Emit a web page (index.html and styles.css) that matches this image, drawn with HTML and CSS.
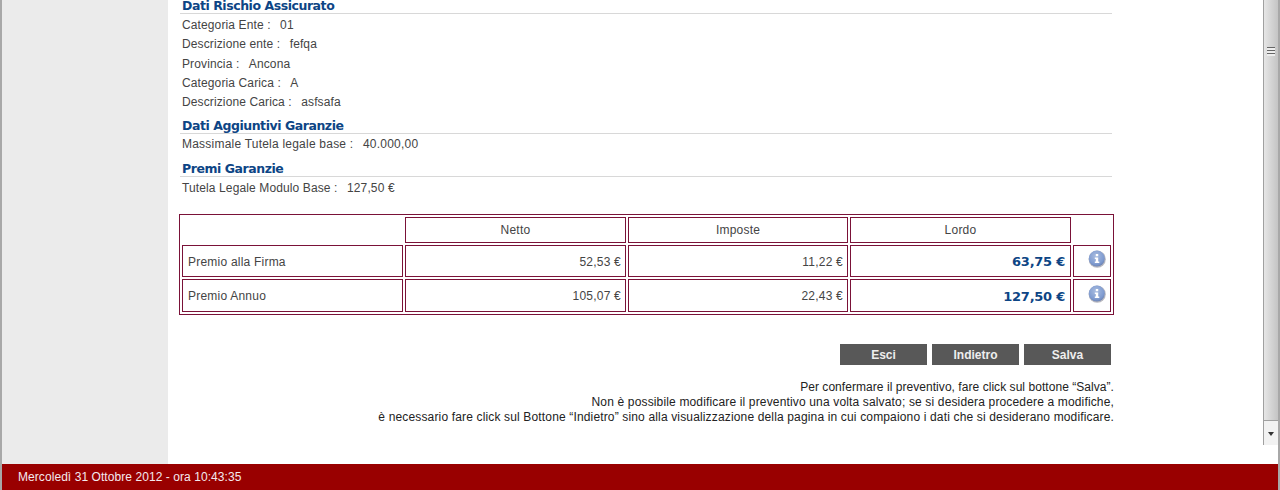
FILE: index.html
```html
<!DOCTYPE html>
<html lang="it">
<head>
    <meta charset="UTF-8">
    <meta name="viewport" content="width=device-width, initial-scale=1.0">
    <title>Preventivo</title>
    <link rel="stylesheet" href="styles.css">
</head>
<body>
    <div class="pagina">
        <div class="laterale"></div>
        <div class="contenuto">
            <h2 class="titolo primo">Dati Rischio Assicurato</h2>
            <p class="riga">Categoria Ente : <span class="dato">01</span></p>
            <p class="riga">Descrizione ente : <span class="dato">fefqa</span></p>
            <p class="riga">Provincia : <span class="dato">Ancona</span></p>
            <p class="riga">Categoria Carica : <span class="dato">A</span></p>
            <p class="riga">Descrizione Carica : <span class="dato">asfsafa</span></p>
            <h2 class="titolo">Dati Aggiuntivi Garanzie</h2>
            <p class="riga larga">Massimale Tutela legale base : <span class="dato">40.000,00</span></p>
            <h2 class="titolo terzo">Premi Garanzie</h2>
            <p class="riga">Tutela Legale Modulo Base : <span class="dato">127,50 €</span></p>

            <table class="premi">
                <tr class="testata">
                    <td class="vuota"></td>
                    <td class="c-num">Netto</td>
                    <td class="c-num">Imposte</td>
                    <td class="c-num">Lordo</td>
                    <td class="vuota"></td>
                </tr>
                <tr class="firma">
                    <td class="nome">Premio alla Firma</td>
                    <td class="val">52,53 €</td>
                    <td class="val">11,22 €</td>
                    <td class="val lordo">63,75 €</td>
                    <td class="info">
                        <svg class="icona" viewBox="0 0 18 18" width="18" height="18">
                            <defs>
                                <radialGradient id="palla" cx="45%" cy="35%" r="65%">
                                    <stop offset="0" stop-color="#a9bde0"/>
                                    <stop offset="0.75" stop-color="#7f9bd0"/>
                                    <stop offset="1" stop-color="#6d84b4"/>
                                </radialGradient>
                            </defs>
                            <circle cx="9.2" cy="9.2" r="8.6" fill="#b9b9c0"/>
                            <circle cx="8.8" cy="8.6" r="8" fill="url(#palla)"/>
                            <rect x="7.8" y="4" width="2.4" height="2.2" fill="#fff"/>
                            <path d="M6.8 7.4h3.4v4.2h1.1v1.5H6.8v-1.5h1V8.9h-1z" fill="#fff"/>
                        </svg>
                    </td>
                </tr>
                <tr class="annuo">
                    <td class="nome">Premio Annuo</td>
                    <td class="val">105,07 €</td>
                    <td class="val">22,43 €</td>
                    <td class="val lordo">127,50 €</td>
                    <td class="info">
                        <svg class="icona" viewBox="0 0 18 18" width="18" height="18">
                            <circle cx="9.2" cy="9.2" r="8.6" fill="#b9b9c0"/>
                            <circle cx="8.8" cy="8.6" r="8" fill="url(#palla)"/>
                            <rect x="7.8" y="4" width="2.4" height="2.2" fill="#fff"/>
                            <path d="M6.8 7.4h3.4v4.2h1.1v1.5H6.8v-1.5h1V8.9h-1z" fill="#fff"/>
                        </svg>
                    </td>
                </tr>
            </table>

            <div class="bottoni">
                <button type="button" class="bottone">Esci</button>
                <button type="button" class="bottone">Indietro</button>
                <button type="button" class="bottone">Salva</button>
            </div>

            <div class="nota">
                <span class="nota-breve">Per confermare il preventivo, fare click sul bottone “Salva”.</span><br>
                Non è possibile modificare il preventivo una volta salvato; se si desidera procedere a modifiche,<br>
                è necessario fare click sul Bottone “Indietro” sino alla visualizzazione della pagina in cui compaiono i dati che si desiderano modificare.
            </div>
        </div>
        <div class="scroll">
            <div class="scroll-barra">
                <div class="scroll-presa"></div>
            </div>
            <div class="scroll-freccia"></div>
        </div>
    </div>
    <footer class="piede">Mercoledì 31 Ottobre 2012 - ora 10:43:35</footer>
</body>
</html>
```

FILE: styles.css
```css
*{box-sizing: border-box;}
html,body{margin: 0;padding: 0;height: 490px;overflow: hidden;background-color: #fff;}
body{display: flex;flex-direction: column;font-family: "Liberation Sans", Arial, sans-serif;font-size: 12px;color: #444;border-left: 2px solid #a8a8a8;border-right: 2px solid #a8a8a8;}

.pagina{display: flex;height: 464px;}
.laterale{width: 166px;background-color: #ebebeb;}
.contenuto{width: 946px;padding-left: 12px;}
.scroll{width: 15px;margin-left: auto;height: 445px;display: flex;flex-direction: column;border-left: 1px solid #a0a0a0;}

.titolo{margin: 6px 0 0 0;width: 932px;padding: 0 0 0 2px;height: 17px;font-family: "DejaVu Sans", Verdana, sans-serif;font-size: 12.5px;letter-spacing: -0.45px;line-height: 17px;font-weight: bold;color: #0d4585;border-bottom: 1px solid #d8d8d8;}
.titolo.primo{margin: -2px 0 1px 0;height: 16px;line-height: 15px;}
.titolo.terzo{margin-bottom: 1px;}
.riga{margin: 0;padding-left: 2px;height: 19.25px;line-height: 21px;letter-spacing: 0.12px;}
.riga.larga{letter-spacing: 0.22px;}
.dato{margin-left: 6px;}

.premi{margin: 17px 0 0 -1px;width: 935px;border: 1px solid #7a1238;border-spacing: 2px;border-collapse: separate;table-layout: fixed;letter-spacing: 0.22px;}
.premi td{border: 1px solid #7a1238;padding: 0 5px;}
.premi td.vuota{border: none;}
.premi td:nth-child(1),.premi td:nth-child(2),.premi td:nth-child(4){width: 221px;}
.premi td:nth-child(3){width: 220px;}
.testata td{height: 26px;}
.firma td{height: 32px;padding-top: 2px;}
.annuo td{height: 33px;padding-top: 2px;}
.c-num{text-align: center;}
.premi td.val{text-align: right;padding-right: 4px;}
.premi td.lordo{font-family: "DejaVu Sans", Verdana, sans-serif;font-size: 13px;font-weight: bold;letter-spacing: -0.25px;color: #0d4585;padding-right: 5px;}
.premi td.info{padding: 4px 0 0 14px;vertical-align: top;}
.annuo td.info{padding-top: 5px;}
.icona{display: block;}

.bottoni{display: flex;justify-content: flex-end;gap: 5px;width: 931px;margin-top: 29px;}
.bottone{width: 87px;height: 21px;border: none;padding: 1px 0 0 0;background-color: #585858;color: #eee;font-family: "Liberation Sans", Arial, sans-serif;font-size: 12px;font-weight: bold;}

.nota{width: 934px;margin-top: 15px;text-align: right;line-height: 15px;color: #222;letter-spacing: 0.153px;}
.nota-breve{letter-spacing: 0.05px;}

.scroll-barra{height: 421px;position: relative;border-bottom: 1px solid #a0a0a0;background: linear-gradient(to right, #e6e6e6, #d8d8d8 40%, #c4c4c4);}
.scroll-presa{position: absolute;left: 3px;top: 47px;width: 8px;height: 9px;background: repeating-linear-gradient(to bottom, #666 0, #666 1px, #eee 1px, #eee 3px);}
.scroll-freccia{flex: 1;position: relative;background-color: #f2f2f2;}
.scroll-freccia::after{content: "";position: absolute;left: 4px;top: 11px;border-left: 3.5px solid transparent;border-right: 3.5px solid transparent;border-top: 4px solid #333;}

.piede{height: 26px;background-color: #990000;color: #f4e9ee;padding-left: 16px;line-height: 26px;font-size: 12px;letter-spacing: 0.065px;}
```
